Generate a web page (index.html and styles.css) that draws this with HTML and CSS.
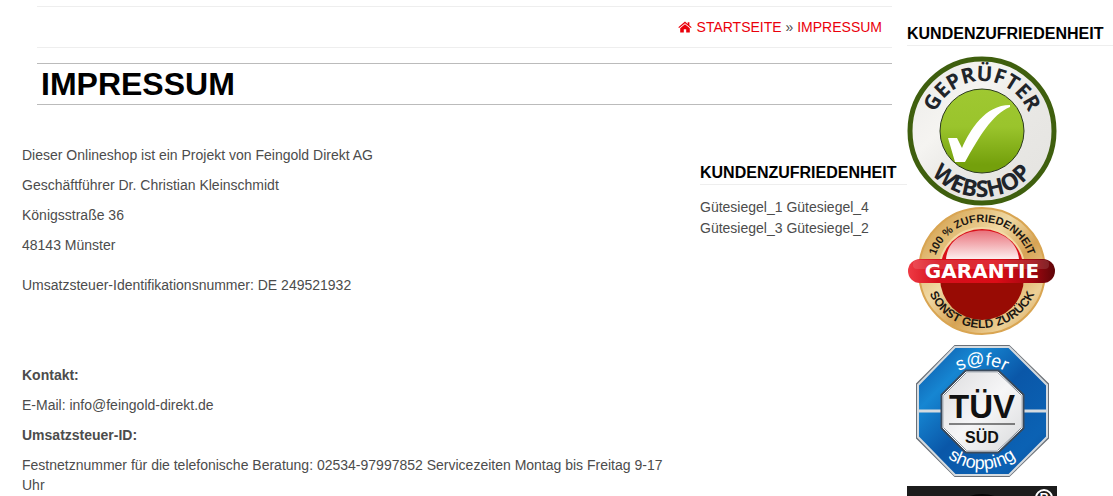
FILE: index.html
```html
<!DOCTYPE html>
<html lang="de">
<head>
    <meta charset="UTF-8">
    <meta name="viewport" content="width=device-width, initial-scale=1.0">
    <title>Impressum</title>
    <link rel="stylesheet" href="styles.css">
</head>
<body>
    <div class="page">
        <main class="main">
            <nav class="breadcrumb">
                <a href="#"><svg class="home" viewBox="0 0 14 12" aria-hidden="true">
                    <path d="M7 3.2 2.2 7.2V11.4H5.8V8.2H8.2V11.4H11.8V7.2Z"/>
                    <path d="M7 .6.3 6.2 1.1 7.1 7 2.2 12.9 7.1 13.7 6.2 11.4 4.3V1.2H9.7V2.9Z"/>
                </svg>STARTSEITE</a> » <a href="#">IMPRESSUM</a>
            </nav>

            <h1>IMPRESSUM</h1>

            <div class="content">
                <article class="text">
                    <p>Dieser Onlineshop ist ein Projekt von Feingold Direkt AG</p>
                    <p>Geschäftführer Dr. Christian Kleinschmidt</p>
                    <p>Königsstraße 36</p>
                    <p>48143 Münster</p>
                    <p class="tax">Umsatzsteuer-Identifikationsnummer: DE 249521932</p>
                    <p><strong>Kontakt:</strong></p>
                    <p>E-Mail: info@feingold-direkt.de</p>
                    <p><strong>Umsatzsteuer-ID:</strong></p>
                    <p>Festnetznummer für die telefonische Beratung: 02534-97997852 Servicezeiten Montag bis Freitag 9-17 Uhr</p>
                </article>

                <aside class="widget">
                    <h2>KUNDENZUFRIEDENHEIT</h2>
                    <p>Gütesiegel_1 Gütesiegel_4 Gütesiegel_3 Gütesiegel_2</p>
                </aside>
            </div>
        </main>

        <aside class="sidebar">
            <h2>KUNDENZUFRIEDENHEIT</h2>

            <!-- Geprüfter Webshop -->
            <svg class="seal" viewBox="0 0 150 150">
                <defs>
                    <linearGradient id="ring" x1="0" y1="0" x2="1" y2="1">
                        <stop offset="0" stop-color="#ebeae8"/>
                        <stop offset=".35" stop-color="#f5f4f1"/>
                        <stop offset=".55" stop-color="#e9e8e5"/>
                        <stop offset="1" stop-color="#e4e3e0"/>
                    </linearGradient>
                    <linearGradient id="green" x1="0" y1="0" x2="0" y2="1">
                        <stop offset="0" stop-color="#9fc831"/>
                        <stop offset=".45" stop-color="#9ac42c"/>
                        <stop offset=".9" stop-color="#74a00c"/>
                    </linearGradient>
                    <path id="shopTop" d="M25 75a50 50 0 0 1 100 0"/>
                    <path id="shopBottom" d="M9 75a66 66 0 0 0 132 0"/>
                </defs>
                <circle cx="75" cy="75" r="72" fill="url(#ring)" stroke="#3f5f0e" stroke-width="5"/>
                <circle cx="75" cy="75" r="42" fill="url(#green)" stroke="#2b3a1c"/>
                <path d="M41 82H50L55 92C63 74 78 49 103 49V51C85 58 71 83 58 106H48Z" fill="#fff"/>
                <g class="shop-text">
                    <text><textPath href="#shopTop" startOffset="50%">GEPRÜFTER</textPath></text>
                    <text class="webshop"><textPath href="#shopBottom" startOffset="50%">WEBSHOP</textPath></text>
                </g>
            </svg>

            <!-- Garantie -->
            <svg class="seal" viewBox="0 0 150 130">
                <defs>
                    <linearGradient id="gold" x1="0" y1="0" x2="1" y2="1">
                        <stop offset="0" stop-color="#c78a35"/>
                        <stop offset=".2" stop-color="#dfb66c"/>
                        <stop offset=".4" stop-color="#f0d9a4"/>
                        <stop offset=".6" stop-color="#d6a355"/>
                        <stop offset=".8" stop-color="#edd096"/>
                        <stop offset="1" stop-color="#c98d3b"/>
                    </linearGradient>
                    <linearGradient id="shine" x1="0" y1="0" x2="0" y2="1">
                        <stop offset="0" stop-color="#e9727b"/>
                        <stop offset="1" stop-color="#fdeeee"/>
                    </linearGradient>
                    <linearGradient id="bar" x1="0" y1="0" x2="1" y2="0">
                        <stop offset="0" stop-color="#ee3a44"/>
                        <stop offset=".2" stop-color="#d5101c"/>
                        <stop offset=".6" stop-color="#dc0c17"/>
                        <stop offset=".85" stop-color="#a00710"/>
                        <stop offset="1" stop-color="#5e0508"/>
                    </linearGradient>
                    <path id="moneyTop" d="M26 65a49 49 0 0 1 98 0"/>
                    <path id="moneyBottom" d="M18 65a57 57 0 0 0 114 0"/>
                </defs>
                <circle cx="75" cy="65" r="63" fill="url(#gold)" stroke="#d9a552" stroke-width="2"/>
                <circle cx="75" cy="65" r="44" fill="#f3d9a5"/>
                <circle cx="75" cy="65" r="42" fill="#d90f18"/>
                <path d="M33 72a42 42 0 0 0 84 0Z" fill="#980b04"/>
                <path d="M39 53C42 15 108 15 112 53Z" fill="url(#shine)"/>
                <rect x="1" y="53" width="147" height="24" rx="12" fill="url(#bar)"/>
                <rect x="6" y="54" width="136" height="9" rx="4" fill="#fff" opacity=".12"/>
                <text class="garantie" x="75" y="72">GARANTIE</text>
                <text class="money-top"><textPath href="#moneyTop" startOffset="50%">100 % ZUFRIEDENHEIT</textPath></text>
                <text class="money-bottom"><textPath href="#moneyBottom" startOffset="50%">SONST GELD ZURÜCK</textPath></text>
            </svg>

            <!-- TÜV Süd -->
            <svg class="seal" viewBox="0 0 150 150">
                <defs>
                    <linearGradient id="blue" x1="0" y1="0" x2="1" y2="1">
                        <stop offset="0" stop-color="#0c4f9e"/>
                        <stop offset=".25" stop-color="#1686d2"/>
                        <stop offset=".5" stop-color="#0a57a8"/>
                        <stop offset=".8" stop-color="#0b62b4"/>
                        <stop offset="1" stop-color="#0c4c98"/>
                    </linearGradient>
                    <linearGradient id="silver" x1="0" y1="0" x2="1" y2="1">
                        <stop offset="0" stop-color="#dcdcde"/>
                        <stop offset=".5" stop-color="#f6f6f7"/>
                        <stop offset="1" stop-color="#d9dadc"/>
                    </linearGradient>
                    <path id="tuvTop" d="M29 75a46 46 0 0 1 92 0"/>
                    <path id="tuvBottom" d="M17 75a58 58 0 0 0 116 0"/>
                </defs>
                <path d="M48 10H102L141 48V102L102 140H48L10 102V48Z" fill="url(#blue)" stroke="#6b7077" stroke-width="2"/>
                <path d="M48 11H102L140 49V101L102 139H48L11 101V49Z" fill="none" stroke="#d5dbe0" stroke-width="2"/>
                <path d="M11 75H36M116 75H140" stroke="#d5dbe0" stroke-width="3"/>
                <path d="M59 35H91L116 59V92L91 116H59L35 92V59Z" fill="url(#silver)" stroke="#3c4b5c" stroke-width="3"/>
                <path d="M59 36H91L115 59V92L91 115H59L36 92V59Z" fill="none" stroke="#fff"/>
                <text class="tuv" x="75" y="82">TÜV</text>
                <path d="M42 88H108" stroke="#111"/>
                <text class="sued" x="75" y="107">SÜD</text>
                <g class="tuv-ring">
                    <text><textPath href="#tuvTop" startOffset="50%">s@fer</textPath></text>
                    <text><textPath href="#tuvBottom" startOffset="50%">shopping</textPath></text>
                </g>
            </svg>

            <svg class="seal" viewBox="0 0 150 150">
                <rect width="150" height="150" fill="#1c1c1c"/>
                <ellipse cx="75" cy="34" rx="32" ry="26" fill="#050505"/>
                <circle cx="137" cy="12" r="8" fill="none" stroke="#fff" stroke-width="2"/>
                <text class="registered" x="137" y="16">R</text>
            </svg>
        </aside>
    </div>
</body>
</html>
```
FILE: styles.css
```css
* {
    box-sizing: border-box;
}

body {
    margin: 0;
    height: 100vh;
    overflow: hidden;
    background: #fff;
    color: #4c4c4c;
    font-family: "Liberation Sans", Arial, sans-serif;
    font-size: 14px;
    line-height: 20px;
}

a {
    color: #ea000b;
    text-decoration: none;
}

h1, h2, p {
    margin: 0;
}

.page {
    display: flex;
}

.main {
    flex: 1;
    min-width: 0;
    padding-top: 6px;
}

.breadcrumb {
    margin: 0 15px 15px 37px;
    padding: 10px;
    border-top: 1px solid #eee;
    border-bottom: 1px solid #eee;
    text-align: right;
}

.home {
    width: 14px;
    height: 12px;
    margin-right: 5px;
    vertical-align: -1px;
    fill: currentColor;
}

h1 {
    margin: 0 15px 0 37px;
    padding: 0 4px;
    border-top: 1px solid #bbb;
    border-bottom: 1px solid #bbb;
    color: #000;
    font-size: 32px;
    line-height: 40px;
}

.content {
    display: flex;
    gap: 15px;
    padding: 40px 0 0 22px;
}

.text {
    flex: 1;
}

.text p {
    margin-bottom: 10px;
}

.text .tax {
    margin: 20px 0 70px;
}

.widget {
    width: 207px;
    padding-top: 17px;
}

.widget p {
    padding-right: 30px;
    line-height: 21px;
}

h2 {
    margin-bottom: 12px;
    border-bottom: 1px solid #eee;
    color: #000;
    font-size: 16px;
    line-height: 22px;
}

.sidebar {
    width: 206px;
    padding-top: 23px;
}

.sidebar h2 {
    margin-bottom: 10px;
}

/* seals */
.seal {
    display: block;
    width: 150px;
}

.seal text {
    text-anchor: middle;
}

.shop-text {
    fill: #20242a;
    font: 700 21px "Open Sans", sans-serif;
}

.webshop {
    font-size: 23px;
}

.garantie {
    fill: #fff;
    font: 700 20px "DejaVu Sans", sans-serif;
}

.money-top {
    fill: #1c1712;
    font: 700 11px "Liberation Sans", sans-serif;
}

.money-bottom {
    fill: #1c1712;
    font: 700 12px "Liberation Sans", sans-serif;
}

.tuv {
    fill: #111;
    font: 700 33px "Liberation Sans", sans-serif;
}

.sued {
    fill: #111;
    font: 700 16px "Liberation Sans", sans-serif;
}

.tuv-ring {
    fill: #fff;
    font: 18px "Liberation Sans", sans-serif;
}

.registered {
    fill: #fff;
    font: 700 12px "Liberation Sans", sans-serif;
}
```
